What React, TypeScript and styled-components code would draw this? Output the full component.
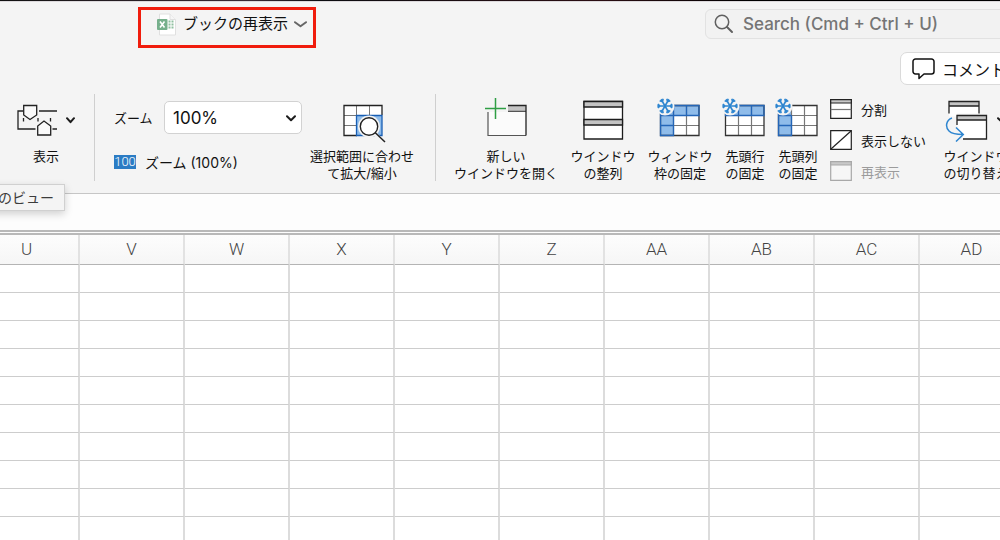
import React from "react";
import styled, { createGlobalStyle } from "styled-components";

const GlobalStyle = createGlobalStyle`
  * { box-sizing: border-box; }
  body {
    margin: 0;
    background: #ffffff;
    color: #111111;
    font-family: Inter, "Noto Sans CJK JP", sans-serif;
    font-size: 13px;
    overflow: hidden;
  }
  button, input, select { font: inherit; color: inherit; }
`;

const Window = styled.main`
  position: relative;
  display: flex;
  flex-direction: column;
  height: 100vh;
  overflow: hidden;
`;

const DesktopEdge = styled.div`
  flex: none;
  height: 2px;
  background: linear-gradient(90deg, #111, #3b2a35 25%, #0c0c10 32%, #2a0d12 60%, #000 75%, #000);
  border-bottom: 1px solid #dcd9dc;
`;

const Chrome = styled.header`
  flex: none;
  background: #f4f4f4;
  border-bottom: 1px solid #c6c6c6;
`;

const TitleBar = styled.div`
  display: flex;
  align-items: flex-start;
  height: 50px;
  padding: 5px 0 0 138px;
`;

const DocumentButton = styled.button`
  display: flex;
  align-items: flex-start;
  gap: 6px;
  height: 41px;
  padding: 3px 6px 0 15px;
  border: 3px solid #f01c0c;
  background: transparent;
  font-size: 15px;
  line-height: 22px;
  white-space: nowrap;

  svg:last-child { margin-top: 8px; }
`;

const SearchBox = styled.label`
  display: flex;
  align-items: center;
  flex: 0 0 315px;
  gap: 9px;
  height: 30px;
  margin: 2px -20px 0 auto;
  padding-left: 8px;
  border: 1px solid #e2e2e2;
  border-radius: 6px;
  background: #f2f2f2;
`;

const SearchInput = styled.input`
  flex: 1;
  min-width: 0;
  padding: 0;
  border: 0;
  outline: 0;
  background: transparent;
  font-size: 17px;
  font-weight: 500;

  &::placeholder { color: #757575; opacity: 1; }
`;

const TabRow = styled.div`
  display: flex;
  justify-content: flex-end;
  height: 36px;
`;

const CommentButton = styled.button`
  display: flex;
  align-items: center;
  flex: 0 0 124px;
  gap: 7px;
  height: 33px;
  margin-right: -24px;
  padding: 0 0 0 11px;
  border: 1px solid #dadada;
  border-radius: 7px;
  background: #ffffff;
  font-size: 16px;
  white-space: nowrap;
`;

const Ribbon = styled.div`
  display: flex;
  align-items: flex-start;
  padding: 6px 0 11px 17px;
`;

const Divider = styled.div`
  flex: none;
  width: 1px;
  height: 87px;
  background: #cfcfcf;
`;

const Tool = styled.button<{ $width: number }>`
  display: flex;
  flex: none;
  flex-direction: column;
  align-items: center;
  gap: 6px;
  width: ${(p) => p.$width}px;
  margin-top: 4px;
  padding: 0;
  border: 0;
  background: transparent;
  line-height: 17px;
  white-space: nowrap;
`;

const IconRow = styled.span`
  display: flex;
  align-items: center;
  gap: 9px;
`;

const ToolGroup = styled.div<{ $gap: number; $before: number; $after: number }>`
  display: flex;
  flex: none;
  gap: ${(p) => p.$gap}px;
  margin: 0 ${(p) => p.$after}px 0 ${(p) => p.$before}px;
`;

const ZoomPanel = styled.div`
  display: flex;
  flex-direction: column;
  gap: 18px;
  width: 188px;
  padding-top: 7px;
`;

const ZoomField = styled.label`
  display: flex;
  align-items: center;
  justify-content: space-between;
`;

const SelectFrame = styled.span`
  position: relative;
  width: 138px;

  svg {
    position: absolute;
    top: 14px;
    right: 6px;
    pointer-events: none;
  }
`;

const ZoomSelect = styled.select`
  display: block;
  appearance: none;
  width: 100%;
  height: 33px;
  padding: 0 8px;
  border: 1px solid #d2d2d2;
  border-radius: 5px;
  background: #ffffff;
  font-size: 17px;
`;

const InlineTool = styled.button`
  display: flex;
  align-items: center;
  gap: 9px;
  height: 20px;
  padding: 0;
  border: 0;
  background: transparent;
  font-size: 14px;
  white-space: nowrap;

  &:disabled { color: #9b9b9b; }
`;

const HundredBadge = styled.span`
  width: 22px;
  height: 14px;
  background: #2b7cc4;
  color: #ffffff;
  font: 300 13px/14px Roboto, sans-serif;
  text-align: center;
`;

const WindowList = styled.div`
  display: flex;
  flex: none;
  flex-direction: column;
  gap: 11px;
  width: 98px;
  padding-top: 5px;

  button { font-size: 13px; }
`;

const FormulaBar = styled.div`
  flex: none;
  height: 41px;
  border-bottom: 5px double #b9b9b9;
  background: #fdfdfd;
`;

const SheetArea = styled.section`
  flex: 1;
  min-height: 0;
  overflow: hidden;
`;

const Sheet = styled.table`
  width: 1050px;
  margin-left: -25px;
  border-collapse: separate;
  border-spacing: 0;
  table-layout: fixed;
`;

const ColumnHead = styled.th`
  height: 30px;
  padding: 0 0 1px;
  border-right: 2px solid #e2e2e2;
  border-bottom: 1px solid #b4b4b4;
  background: linear-gradient(#fdfdfd, #f6f6f6);
  color: #444444;
  font: 300 17px/28px Roboto, sans-serif;
`;

const Cell = styled.td`
  height: 28px;
  padding: 0;
  border-right: 2px solid #dcdcdc;
  border-bottom: 1px solid #cdcdcd;
`;

const Tooltip = styled.div`
  position: absolute;
  top: 184px;
  left: -13px;
  padding: 2px 10px;
  border: 1px solid #d0d0d0;
  background: #f4f4f4;
  box-shadow: 0 3px 8px rgba(0, 0, 0, 0.18);
  color: #3c3c3c;
  font-size: 14px;
  line-height: 21px;
`;

const Chevron = ({ width = 10, color = "#1c1c1c" }: { width?: number; color?: string }) => (
  <svg width={width} height="7" viewBox={`0 0 ${width} 7`} fill="none" stroke={color} strokeWidth="2">
    <path d={`M1 1.2 L${width / 2} 5.2 L${width - 1} 1.2`} strokeLinecap="round" strokeLinejoin="round" />
  </svg>
);

const WorkbookIcon = () => (
  <svg width="21" height="23" viewBox="0 0 21 23">
    <path d="M3.500 1h10.500l5.500 5.500V22h-16z" fill="#fff" stroke="#e0e0e0" />
    <path d="M14 1v5.500h5.500" fill="#f6f6f6" stroke="#e0e0e0" />
    <rect x="1" y="6" width="10.500" height="11" rx="1" fill="#76b08c" />
    <path d="M4 8.500l4.500 6M8.500 8.500L4 14.500" stroke="#fff" strokeWidth="1.600" />
    <path d="M12.500 8.500h5M12.500 11.500h5M12.500 14.500h5" stroke="#8fc0a0" strokeWidth="2" strokeDasharray="2 1" />
  </svg>
);

const SearchIcon = () => (
  <svg width="20" height="20" viewBox="0 0 20 20" fill="none" stroke="#606060" strokeWidth="1.500">
    <circle cx="8" cy="8" r="6.700" />
    <path d="M13 13l5 5" strokeWidth="2" strokeLinecap="round" />
  </svg>
);

const CommentIcon = () => (
  <svg width="23" height="22" viewBox="0 0 23 22" fill="none" stroke="#111" strokeWidth="1.500">
    <path d="M3.500 1h16a2.500 2.500 0 0 1 2.500 2.500v10a2.500 2.500 0 0 1-2.500 2.500H12l-5 4.500V16H3.500A2.500 2.500 0 0 1 1 13.500v-10A2.500 2.500 0 0 1 3.500 1z" strokeLinejoin="round" />
  </svg>
);

const ViewIcon = () => (
  <svg width="40" height="44" viewBox="0 0 40 44" fill="none" stroke="#222" strokeWidth="1.300">
    <path d="M6 13H1v18h17.500M22 13h18M35.500 31H40" />
    <path d="M6.500 20v3.500M21 20v3.500M33.500 20v3.500" />
    <path d="M6.700 7.500h13v9.500L13 21.500 6.700 17z" fill="#fafafa" />
    <path d="M20.700 37h13v-9L27 23l-6.300 5z" fill="#fafafa" />
  </svg>
);

const FitIcon = () => (
  <svg width="44" height="44" viewBox="0 0 44 44" fill="none" overflow="visible">
    <path d="M4 7.500h38v30H4z" fill="#fff" />
    <path d="M16.500 17.500H42v20H16.500z" fill="#8fbcea" />
    <path d="M4 17.500h13M4 27.500h13M16.500 7v10M29.500 7v10" stroke="#777" />
    <path d="M42 17V7.500H4v30h13" stroke="#222" strokeWidth="1.300" />
    <path d="M42 37.500v-20H16.500v20z" stroke="#1a5fb4" strokeWidth="1.300" />
    <circle cx="29" cy="28.500" r="11" fill="#f4f4f4" />
    <path d="M34 35l10 10" stroke="#f4f4f4" strokeWidth="4" />
    <circle cx="29" cy="28.500" r="8.700" fill="#fff" stroke="#222" strokeWidth="1.400" />
    <path d="M35.300 34.700L45 44" stroke="#222" strokeWidth="1.500" />
  </svg>
);

const NewWindowIcon = () => (
  <svg width="44" height="44" viewBox="0 0 44 44" fill="none">
    <path d="M4 14h20V8h18v29H4z" fill="#fbfbfb" />
    <path d="M24 7.500h18V13H24z" fill="#c4c4c4" />
    <path d="M24 13.300h18M4 14v23.500h38" stroke="#555" strokeWidth="1.200" />
    <path d="M24 7.500h18v30" stroke="#222" strokeWidth="1.300" />
    <path d="M1 10.500h21M11.500 0v21" stroke="#2f9e44" strokeWidth="1.500" />
  </svg>
);

const ArrangeIcon = () => (
  <svg width="44" height="44" viewBox="0 0 44 44" fill="none" stroke="#1c1c1c" strokeWidth="1.300">
    <path d="M3 3.500h38.500v37.500H3z" fill="#fff" />
    <path d="M3 3.500h38.500V9H3zM3 21.500h38.500V27H3z" fill="#c4c4c4" />
  </svg>
);

const FreezeIcon = ({ row = false, column = false }: { row?: boolean; column?: boolean }) => (
  <svg width="44" height="44" viewBox="0 0 44 44" fill="none" overflow="visible">
    <path d="M2.500 7.500H41v30H2.500z" fill="#fff" />
    {row && <path d="M2.500 7.500H41v10H2.500z" fill="#8fbcea" />}
    {column && <path d="M2.500 7.500h13v30h-13z" fill="#8fbcea" />}
    <path d="M15.500 7.500v30M28.500 7.500v30M2.500 17.500H41M2.500 27.500H41" stroke="#777" strokeWidth="1.200" />
    <path d="M2.500 7.500H41v30H2.500z" stroke="#333" strokeWidth="1.300" />
    {row && <path d={column ? "M15.500 17.500H41v-10H2.500M28.500 7.500v10M15.500 7.500v10" : "M2.500 17.500H41v-10H2.500zM28.500 7.500v10M15.500 7.500v10"} stroke="#2466b8" strokeWidth="1.300" />}
    {column && <path d="M15.500 17.500v20h-13v-30M2.500 27.500h13M2.500 17.500h13" stroke="#2466b8" strokeWidth="1.300" />}
    <circle cx="7" cy="8" r="9.500" fill="#f4f4f4" />
    <g stroke="#2f86d0" strokeWidth="1.600">
      {[0, 60, 120].map((angle) => (
        <path
          key={angle}
          d="M7 .2v15.600M5 .8L7 3l2-2.200M5 15.200L7 13l2 2.200"
          transform={`rotate(${angle + 90} 7 8)`}
        />
      ))}
    </g>
  </svg>
);

const SwitchIcon = () => (
  <svg width="43" height="44" viewBox="0 0 43 44" fill="none">
    <path d="M4 3.500h30v12H12v3H4z" fill="#fff" />
    <path d="M4 3.500h30V8H4z" fill="#c4c4c4" />
    <path d="M4 15.500v-12h30v12M4 8h30" stroke="#222" strokeWidth="1.300" />
    <path d="M12 17.500h29.500V41H18l-6-14z" fill="#fff" />
    <path d="M12 17.500h29.500V22H12z" fill="#c4c4c4" />
    <path d="M12 27v-9.500h29.500V41H18M12 22h29.500" stroke="#222" strokeWidth="1.300" />
    <path d="M7 20C1 22 0 29 4 33c3 3 8 3.500 14 3.500M11 29.500l7.300 7L11 43.500" stroke="#2f86d0" strokeWidth="1.500" />
  </svg>
);

const SmallWindowIcon = ({ kind }: { kind: "split" | "hide" | "show" }) => (
  <svg width="22" height="20" viewBox="0 0 22 20" fill="none" stroke={kind === "show" ? "#a8a8a8" : "#222"} strokeWidth="1.200">
    <path d="M.7.700h20.600v18.600H.7z" fill={kind === "show" ? "#f6f6f6" : "#fff"} />
    {kind !== "hide" && <path d="M.7.700h20.600V4H.7z" fill="#c8c8c8" />}
    {kind === "split" && <path d="M.7 10.500h20.600" stroke="#777" />}
    {kind === "hide" && <path d="M.7 19.300L21.300.7" />}
  </svg>
);

const columns = ["U", "V", "W", "X", "Y", "Z", "AA", "AB", "AC", "AD"];
const rows = Array.from({ length: 10 }, (_, i) => i);

export default function App() {
  return (
    <Window>
      <GlobalStyle />
      <DesktopEdge />
      <Chrome>
        <TitleBar>
          <DocumentButton>
            <WorkbookIcon />
            ブックの再表示
            <Chevron width={13} color="#666" />
          </DocumentButton>
          <SearchBox>
            <SearchIcon />
            <SearchInput type="search" aria-label="Search" placeholder="Search (Cmd + Ctrl + U)" />
          </SearchBox>
        </TitleBar>
        <TabRow>
          <CommentButton>
            <CommentIcon />
            コメント
          </CommentButton>
        </TabRow>
        <Ribbon>
          <ToolGroup $gap={0} $before={0} $after={19}>
            <Tool $width={58}>
              <IconRow>
                <ViewIcon />
                <Chevron width={9} />
              </IconRow>
              表示
            </Tool>
          </ToolGroup>
          <Divider />
          <ToolGroup $gap={6} $before={19} $after={19}>
            <ZoomPanel>
              <ZoomField>
                ズーム
                <SelectFrame>
                  <ZoomSelect defaultValue="100%">
                    <option>100%</option>
                  </ZoomSelect>
                  <Chevron />
                </SelectFrame>
              </ZoomField>
              <InlineTool>
                <HundredBadge>100</HundredBadge>
                ズーム (100%)
              </InlineTool>
            </ZoomPanel>
            <Tool $width={108}>
              <FitIcon />
              <span>選択範囲に合わせ<br />て拡大/縮小</span>
            </Tool>
          </ToolGroup>
          <Divider />
          <ToolGroup $gap={11} $before={17} $after={15}>
            <Tool $width={106}>
              <NewWindowIcon />
              <span>新しい<br />ウインドウを開く</span>
            </Tool>
            <Tool $width={66}>
              <ArrangeIcon />
              <span>ウインドウ<br />の整列</span>
            </Tool>
            <Tool $width={66}>
              <FreezeIcon row column />
              <span>ウィンドウ<br />枠の固定</span>
            </Tool>
            <Tool $width={42}>
              <FreezeIcon row />
              <span>先頭行<br />の固定</span>
            </Tool>
            <Tool $width={42}>
              <FreezeIcon column />
              <span>先頭列<br />の固定</span>
            </Tool>
            <WindowList>
              <InlineTool><SmallWindowIcon kind="split" />分割</InlineTool>
              <InlineTool><SmallWindowIcon kind="hide" />表示しない</InlineTool>
              <InlineTool disabled><SmallWindowIcon kind="show" />再表示</InlineTool>
            </WindowList>
          </ToolGroup>
          <Tool $width={66}>
            <IconRow>
              <SwitchIcon />
              <Chevron />
            </IconRow>
            <span>ウインドウ<br />の切り替え</span>
          </Tool>
        </Ribbon>
      </Chrome>
      <FormulaBar />
      <SheetArea>
        <Sheet>
          <thead>
            <tr>{columns.map((c) => <ColumnHead key={c} scope="col">{c}</ColumnHead>)}</tr>
          </thead>
          <tbody>
            {rows.map((r) => (
              <tr key={r}>{columns.map((c) => <Cell key={c} />)}</tr>
            ))}
          </tbody>
        </Sheet>
      </SheetArea>
      <Tooltip role="tooltip">のビュー</Tooltip>
    </Window>
  );
}
